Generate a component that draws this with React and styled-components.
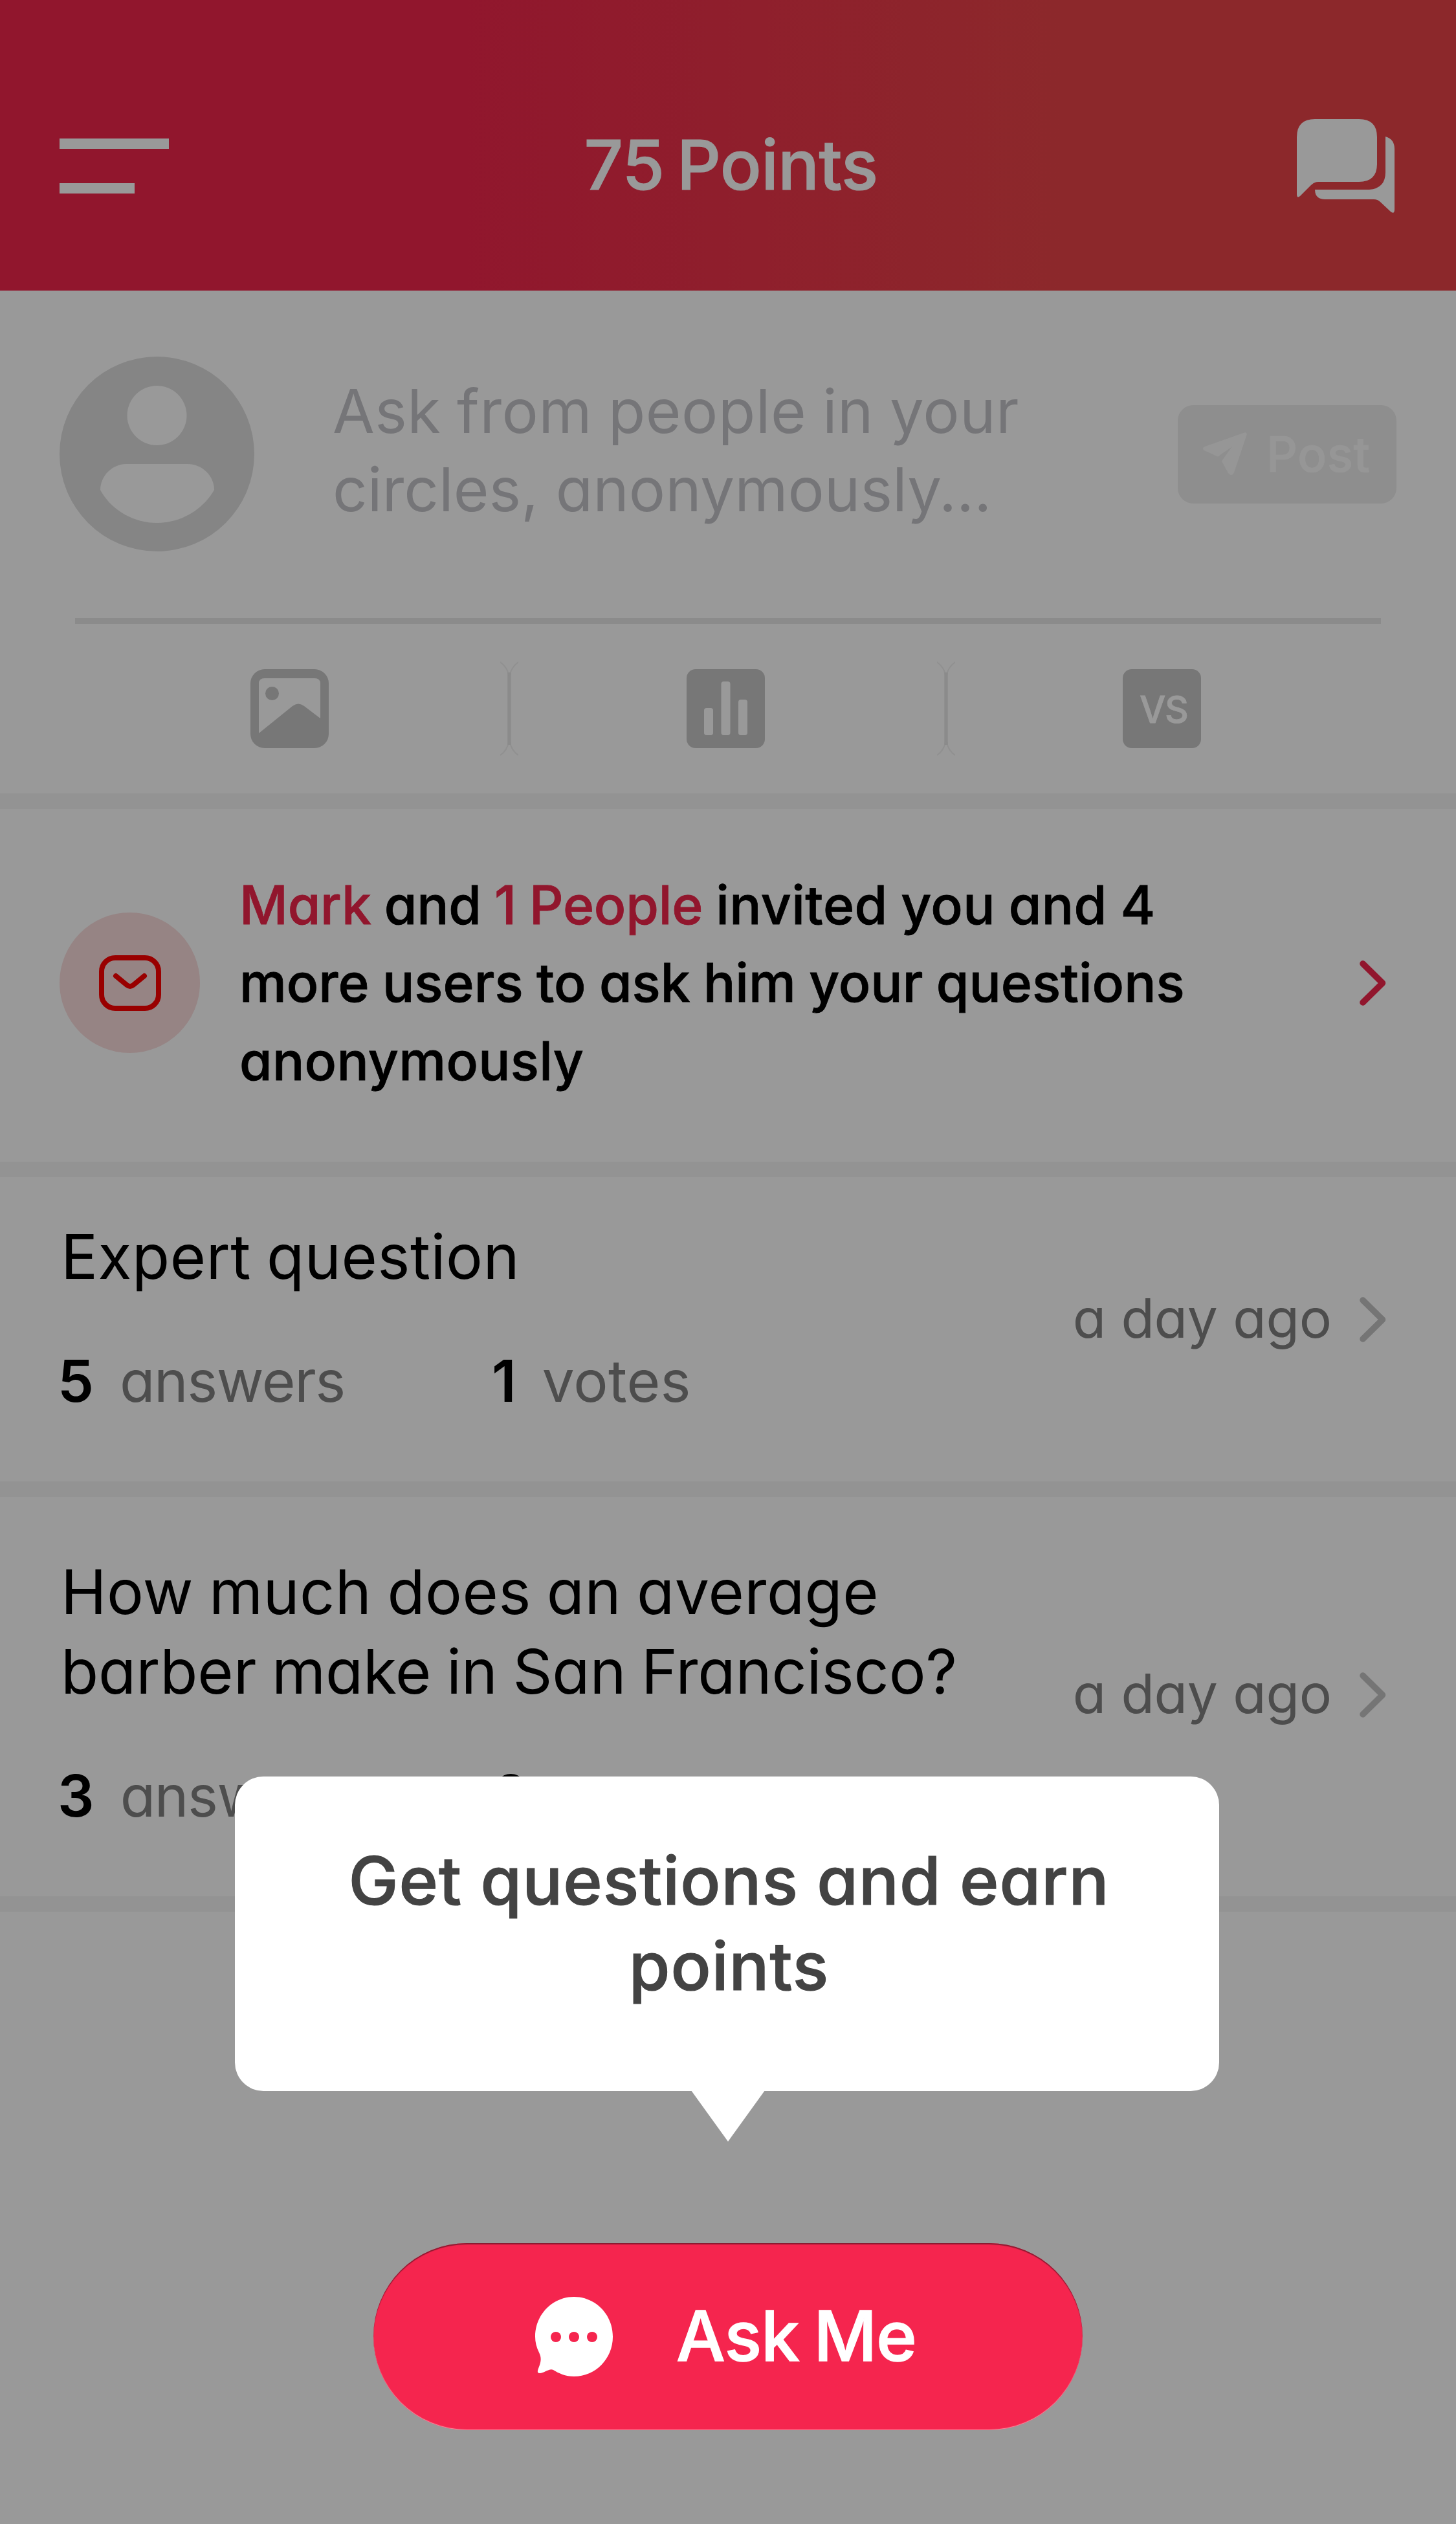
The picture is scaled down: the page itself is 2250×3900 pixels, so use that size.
import React from "react";
import styled, { createGlobalStyle } from "styled-components";

const GlobalStyle = createGlobalStyle`
  * { box-sizing: border-box; }
  body {
    margin: 0;
    background: #fff;
    font-family: Inter, "Open Sans", sans-serif;
    font-feature-settings: "cv11";
    -webkit-font-smoothing: antialiased;
  }
  svg { display: block; flex: none; }
`;

const Screen = styled.main`
  position: relative;
  width: 2250px;
  height: 3900px;
  overflow: hidden;
  background: #fff;
`;

const Header = styled.header`
  display: grid;
  grid-template-columns: 1fr auto 1fr;
  align-items: center;
  height: 449px;
  padding: 64px 95px 0 92px;
  background: linear-gradient(90deg, #f2264b 32%, #ea4449 73%);
`;

const MenuButton = styled.div`
  display: flex;
  flex-direction: column;
  gap: 53px;
`;

const MenuBar = styled.span`
  width: ${(p) => p.$width}px;
  height: 16px;
  background: #fff;
`;

const Title = styled.h1`
  margin: 0;
  padding: 0 0 3px 12px;
  color: #fff;
  font-size: 106px;
  font-weight: 500;
  line-height: 128px;
  letter-spacing: -0.6px;
  word-spacing: -8px;
  -webkit-text-stroke: 1.2px currentColor;
`;

const HeaderAction = styled.div`
  justify-self: end;
`;

const Composer = styled.section`
  padding-top: 102px;
`;

const ComposerRow = styled.div`
  display: flex;
  align-items: center;
  height: 301px;
  padding: 0 92px;
`;

const Prompt = styled.p`
  flex: 1;
  margin: 0 0 0 121px;
  padding-bottom: 12px;
  color: #c4c4c8;
  font-size: 94px;
  line-height: 120.5px;
`;

const PostButton = styled.div`
  display: flex;
  align-items: center;
  gap: 30px;
  width: 338px;
  height: 152px;
  padding-left: 39px;
  border-radius: 24px;
  background: #ededed;
  color: #fbfbfb;
  font-size: 75px;
  font-weight: 500;
  letter-spacing: 0.4px;
  -webkit-text-stroke: 0.6px currentColor;
`;

const Rule = styled.div`
  height: 9px;
  margin: 103px 116px 0;
  background: #e8e8e8;
`;

const Tools = styled.div`
  display: flex;
  align-items: center;
  height: 262px;
  padding: 0 127px;
`;

const Tool = styled.div`
  display: flex;
  justify-content: center;
  width: 640.3px;
`;

const VersusTile = styled.div`
  display: flex;
  align-items: center;
  justify-content: center;
  width: 121px;
  height: 122px;
  padding: 3px 0 0 5px;
  border-radius: 14px;
  background: #c6c6c6;
  color: #fff;
  font-size: 57px;
  font-weight: 500;
  letter-spacing: -1.5px;
  -webkit-text-stroke: 0.8px currentColor;
`;

const Band = styled.div`
  height: 24px;
  background: #f5f5f5;
`;

const Invite = styled.section`
  display: flex;
  align-items: center;
  height: 545px;
  padding: 0 108px 8px 92px;
`;

const InviteBadge = styled.div`
  display: flex;
  align-items: center;
  justify-content: center;
  width: 217px;
  height: 217px;
  border-radius: 50%;
  background: #fadcdc;
`;

const InviteText = styled.p`
  flex: 1;
  margin: 0 0 0 61px;
  padding-top: 2px;
  color: #000;
  font-size: 82px;
  font-weight: 500;
  line-height: 120.4px;
  -webkit-text-stroke: 0.8px currentColor;
`;

const Line = styled.span`
  display: block;
  letter-spacing: ${(p) => p.$spacing || 0}px;
  word-spacing: ${(p) => p.$wordSpacing || 0}px;
`;

const Accent = styled.span`
  color: #f2264b;
`;

const Loose = styled.span`
  letter-spacing: 0.4px;
`;

const QuestionRow = styled.article`
  display: flex;
  align-items: center;
  padding: ${(p) => p.$top}px 108px 101px 94px;
`;

const QuestionBody = styled.div`
  flex: 1;
`;

const QuestionTitle = styled.h2`
  margin: 0 0 77px;
  color: #000;
  font-size: 95px;
  font-weight: 400;
  line-height: 123px;
`;

const Stats = styled.div`
  display: flex;
  margin-left: -5px;
`;

const Stat = styled.div`
  display: flex;
  gap: 40px;
  width: 671px;
  color: #808080;
  font-size: 89px;
  line-height: 108px;
  letter-spacing: ${(p) => p.$spacing || 0}px;
`;

const Count = styled.strong`
  color: #000;
  font-weight: 600;
  letter-spacing: 0;
`;

const Meta = styled.div`
  display: flex;
  align-items: center;
  gap: 43px;
  padding-top: 6px;
  color: #808080;
  font-size: 84px;
  line-height: 102px;
  letter-spacing: -0.2px;

  svg { margin-top: 4px; }
`;

const Backdrop = styled.div`
  position: absolute;
  inset: 0;
  background: rgba(0, 0, 0, 0.4);
`;

const Tooltip = styled.div`
  position: absolute;
  left: 363px;
  top: 2745px;
  width: 1521px;
  height: 486px;
  padding: 95px 150px 0 156px;
  border-radius: 44px;
  background: #fff;
  color: #434343;
  font-size: 103px;
  font-weight: 500;
  line-height: 131.6px;
  letter-spacing: 1px;
  text-align: center;
  -webkit-text-stroke: 1.2px currentColor;

  &::after {
    content: "";
    position: absolute;
    left: 705px;
    top: 485px;
    width: 114px;
    height: 79px;
    background: #fff;
    clip-path: polygon(0 0, 100% 0, 50% 100%);
  }
`;

const AskButton = styled.div`
  position: absolute;
  left: 577px;
  top: 3466px;
  display: flex;
  align-items: center;
  gap: 97px;
  width: 1096px;
  height: 289px;
  padding-left: 250px;
  border-radius: 145px;
  background: #f5254e;
  box-shadow: inset 0 2px 1px #8c1a31, inset 0 -1px 1px rgba(255, 190, 200, 0.7);
  color: #fff;
  font-size: 107px;
  font-weight: 500;
  letter-spacing: -1px;
  word-spacing: -5px;
  -webkit-text-stroke: 1.4px currentColor;
`;

const AskLabel = styled.span`
  padding: 0 0 3px 1px;
`;

const MessagesIcon = () => (
  <svg width="151" height="146" viewBox="0 0 151 146" fill="#fff">
    <path d="M28 0H96Q124 0 124 28V69Q124 97 96 97H33Q27 97 22 102L5 119Q0 123 0 116V28Q0 0 28 0Z" />
    <path d="M137 27Q151 31 151 46V139Q151 148 145 143L129 128Q125 124 119 124H44Q28 124 28 109H112Q137 107 137 82Z" />
  </svg>
);

const AvatarIcon = () => (
  <svg width="301" height="301" viewBox="0 0 301 301">
    <circle cx="150.5" cy="150.5" r="150.5" fill="#dedede" />
    <circle cx="150.5" cy="91" r="46" fill="#fff" />
    <path d="M103 166H198C220 166 239 184 239 206C222 236 188 257 150.500 257C113 257 79 236 63 206C63 184 82 166 103 166Z" fill="#fff" />
  </svg>
);

const PlaneIcon = () => (
  <svg width="68" height="67" viewBox="0 0 68 67" fill="#fbfbfb">
    <path d="M64 0.500Q68 -1 67.500 4L48 62Q44 70 38.500 62L29 44.500L45 22L23 37.500L3 28.500Q-3 25 3 22Z" />
  </svg>
);

const ImageIcon = () => (
  <svg width="121" height="122" viewBox="0 0 121 122">
    <rect width="121" height="122" rx="22" fill="#c6c6c6" />
    <path d="M22 14H99Q108 14 108 22V76L83 57Q74 50 65 57L13 99V22Q13 14 22 14Z" fill="#fff" />
    <circle cx="33.500" cy="37.500" r="10.500" fill="#c6c6c6" />
  </svg>
);

const PollIcon = () => (
  <svg width="121" height="122" viewBox="0 0 121 122">
    <rect width="121" height="122" rx="14" fill="#c6c6c6" />
    <g fill="#fff">
      <rect x="27" y="60" width="14" height="42" rx="4" />
      <rect x="53.500" y="19" width="14" height="83" rx="4" />
      <rect x="80" y="47" width="14" height="55" rx="4" />
    </g>
  </svg>
);

const SeparatorMark = styled.svg`
  margin-left: 6px;
`;

const Separator = () => (
  <SeparatorMark width="28" height="150" viewBox="0 0 28 150" fill="none" stroke="#e8e8e8">
    <path d="M14 19V131" strokeWidth="5.500" />
    <path d="M0 3Q11 11 13 23M28 3Q17 11 15 23M0 147Q11 139 13 127M28 147Q17 139 15 127" strokeWidth="2" strokeOpacity="0.6" />
  </SeparatorMark>
);

const EnvelopeIcon = () => (
  <svg width="98" height="88" viewBox="0 0 98 88" fill="none" stroke="#ff0000" strokeWidth="8" strokeLinecap="round" strokeLinejoin="round">
    <rect x="5" y="5" width="88" height="78" rx="21" />
    <path d="M27 33L44 47Q49 51 54 47L71 33" />
  </svg>
);

const Chevron = ({ color }) => (
  <svg width="41" height="70" viewBox="0 0 41 70" fill="none" stroke={color} strokeWidth="9.500" strokeLinecap="round" strokeLinejoin="round">
    <path d="M5 5L35.500 35L5 65" />
  </svg>
);

const ChatIcon = () => (
  <svg width="120" height="123" viewBox="0 0 120 123">
    <path d="M60 0C93 0 120 27 120 61.500C120 96 93 123 60 123C47 123 36 118 28 113C22 110 14 118 7 118C2 118 4 113 6 108C9 100 10 94 6 86C2 78 0 70 0 61.500C0 27 27 0 60 0Z" fill="#fff" />
    <g fill="#f5254e">
      <circle cx="32" cy="62" r="8" />
      <circle cx="60" cy="62" r="8" />
      <circle cx="88" cy="62" r="8" />
    </g>
  </svg>
);

const questions = [
  {
    lines: [{ text: "Expert question", spacing: 0.5 }],
    top: 61,
    answers: 5,
    votes: 1,
  },
  {
    lines: [
      { text: "How much does an average", spacing: 0.4 },
      { text: "barber make in San Francisco?", spacing: -0.1 },
    ],
    top: 85,
    answers: 3,
    votes: 0,
  },
];

export default function App() {
  return (
    <Screen>
      <GlobalStyle />
      <Header>
        <MenuButton>
          <MenuBar $width={169} />
          <MenuBar $width={116} />
        </MenuButton>
        <Title>75 Points</Title>
        <HeaderAction>
          <MessagesIcon />
        </HeaderAction>
      </Header>

      <Composer>
        <ComposerRow>
          <AvatarIcon />
          <Prompt>
            <Line $spacing={0.4} $wordSpacing={-2}>Ask from people in your</Line>
            <Line>circles, anonymously...</Line>
          </Prompt>
          <PostButton>
            <PlaneIcon />
            Post
          </PostButton>
        </ComposerRow>
        <Rule />
        <Tools>
          <Tool><ImageIcon /></Tool>
          <Separator />
          <Tool><PollIcon /></Tool>
          <Separator />
          <Tool><VersusTile>VS</VersusTile></Tool>
        </Tools>
      </Composer>
      <Band />

      <Invite>
        <InviteBadge><EnvelopeIcon /></InviteBadge>
        <InviteText>
          <Line $spacing={-0.2} $wordSpacing={-1.5}>
            <Accent>Mark</Accent> and <Accent>1 People</Accent>{" "}
            <Loose>invited you and 4</Loose>
          </Line>
          <Line $spacing={0} $wordSpacing={-1.5}>more users to ask him your questions</Line>
          <Line $spacing={0.3}>anonymously</Line>
        </InviteText>
        <Chevron color="#f2264b" />
      </Invite>
      <Band />

      {questions.map((q) => (
        <React.Fragment key={q.lines[0].text}>
          <QuestionRow $top={q.top}>
            <QuestionBody>
              <QuestionTitle>
                {q.lines.map((line) => (
                  <Line key={line.text} $spacing={line.spacing} $wordSpacing={-3}>
                    {line.text}
                  </Line>
                ))}
              </QuestionTitle>
              <Stats>
                <Stat $spacing={-1.4}><Count>{q.answers}</Count>answers</Stat>
                <Stat $spacing={0.3}><Count>{q.votes}</Count>votes</Stat>
              </Stats>
            </QuestionBody>
            <Meta>
              a day ago
              <Chevron color="#c4c4c4" />
            </Meta>
          </QuestionRow>
          <Band />
        </React.Fragment>
      ))}

      <Backdrop />
      <Tooltip>Get questions and earn points</Tooltip>
      <AskButton>
        <ChatIcon />
        <AskLabel>Ask Me</AskLabel>
      </AskButton>
    </Screen>
  );
}
